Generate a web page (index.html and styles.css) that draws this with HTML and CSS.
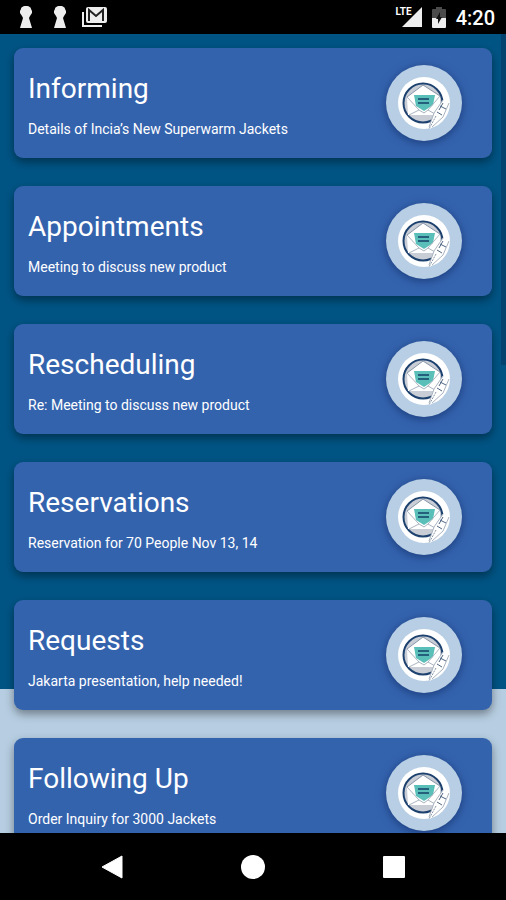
FILE: index.html
```html
<!DOCTYPE html>
<html lang="en">
<head>
    <meta charset="UTF-8">
    <meta name="viewport" content="width=device-width, initial-scale=1.0">
    <title>Email Templates</title>
    <link rel="stylesheet" href="styles.css">
</head>
<body>
    <!-- Shared envelope icon, used by every card -->
    <svg class="sprite" aria-hidden="true">
        <symbol id="envelope" viewBox="0 0 76 76">
            <circle cx="38" cy="38" r="38" fill="#b7cee4"/>
            <circle cx="38" cy="38" r="26" fill="#fff"/>
            <circle cx="37" cy="38" r="19.5" fill="#c9cdd6" stroke="#1d426f" stroke-width="2"/>
            <path d="M21 32 L37 20 L54 31 V50 H22 Z" fill="#fff"/>
            <path d="M21 32 L37 20 L54 31" fill="none" stroke="#8796a8"/>
            <path d="M28 30 H49 L47 40 L38 46 L30 41 Z" fill="#5abfb8"/>
            <path d="M32 34 H43 M32 38 H43" stroke="#24607c" stroke-width="2"/>
            <path d="M21 32 L33 45 L23 50 M54 31 L42 45 L49 49 M33 45 L38 48 L42 45" fill="none" stroke="#a9b3c0"/>
            <path d="M57 35 L63 38 L57 52 L44 64 L43 62 L48 48 Z" fill="#fff"/>
            <path d="M57 35 L48 48 L43 62 M63 38 L57 52 L46 62" fill="none" stroke="#a9b3c0"/>
            <path d="M54 41 L60 44 M51 47 L56 50 M57 38 L53 45" fill="none" stroke="#4e6684"/>
            <path d="M50 51 L43 64" stroke="#8796a8" stroke-dasharray="2 1"/>
        </symbol>
    </svg>

    <header class="status-bar">
        <div class="status-group notices">
            <svg width="14" height="24" viewBox="0 0 14 24" aria-hidden="true">
                <path d="M7 1 C11 1 12 3 12 4 L13 6 V8 L11 11 L10 13 L13 23 H1 L4 13 L3 11 L1 8 V6 L2 4 C2 3 3 1 7 1 Z" fill="#eee"/>
            </svg>
            <svg width="14" height="24" viewBox="0 0 14 24" aria-hidden="true">
                <path d="M7 1 C11 1 12 3 12 4 L13 6 V8 L11 11 L10 13 L13 23 H1 L4 13 L3 11 L1 8 V6 L2 4 C2 3 3 1 7 1 Z" fill="#eee"/>
            </svg>
            <svg width="26" height="22" viewBox="0 0 26 22" aria-hidden="true">
                <path d="M1 6 V20 H20" fill="none" stroke="#eee" stroke-width="2"/>
                <rect x="4" y="1" width="21" height="16" rx="2" fill="#eee"/>
                <path d="M7 15 V4 L14 10 L21 4 V15" fill="none" stroke="#222" stroke-width="2"/>
            </svg>
        </div>
        <div class="status-group">
            <div class="signal">
                <span class="network">LTE</span>
                <svg width="20" height="20" viewBox="0 0 20 20" aria-hidden="true">
                    <path d="M20 0 V20 H0 Z" fill="#eee"/>
                </svg>
            </div>
            <svg width="14" height="21" viewBox="0 0 14 21" aria-hidden="true">
                <path d="M4 0 H10 V2 H13 Q14 2 14 3 V11 H0 V3 Q0 2 1 2 H4 Z" fill="#4b4b4b"/>
                <path d="M0 11 H14 V20 Q14 21 13 21 H1 Q0 21 0 20 Z" fill="#eee"/>
                <path d="M8 5 L4 12 H6 V17 L10 10 H8 Z" fill="#111"/>
            </svg>
            <span class="clock">4:20</span>
        </div>
    </header>

    <main class="content">
        <a class="card" href="#informing">
            <div class="card-text">
                <h2>Informing</h2>
                <p>Details of Incia’s New Superwarm Jackets</p>
            </div>
            <svg class="card-icon" aria-hidden="true"><use href="#envelope"/></svg>
        </a>
        <a class="card" href="#appointments">
            <div class="card-text">
                <h2>Appointments</h2>
                <p>Meeting to discuss new product</p>
            </div>
            <svg class="card-icon" aria-hidden="true"><use href="#envelope"/></svg>
        </a>
        <a class="card" href="#rescheduling">
            <div class="card-text">
                <h2>Rescheduling</h2>
                <p>Re: Meeting to discuss new product</p>
            </div>
            <svg class="card-icon" aria-hidden="true"><use href="#envelope"/></svg>
        </a>
        <a class="card" href="#reservations">
            <div class="card-text">
                <h2>Reservations</h2>
                <p>Reservation for 70 People Nov 13, 14</p>
            </div>
            <svg class="card-icon" aria-hidden="true"><use href="#envelope"/></svg>
        </a>
        <a class="card" href="#requests">
            <div class="card-text">
                <h2>Requests</h2>
                <p>Jakarta presentation, help needed!</p>
            </div>
            <svg class="card-icon" aria-hidden="true"><use href="#envelope"/></svg>
        </a>
        <a class="card" href="#following-up">
            <div class="card-text">
                <h2>Following Up</h2>
                <p>Order Inquiry for 3000 Jackets</p>
            </div>
            <svg class="card-icon" aria-hidden="true"><use href="#envelope"/></svg>
        </a>
        <div class="scroll-thumb"></div>
    </main>

    <nav class="nav-bar">
        <button type="button" aria-label="Back">
            <svg width="24" height="24" viewBox="0 0 24 24" aria-hidden="true">
                <path d="M22 1 V23 L2 12 Z" fill="#fff" stroke="#fff" stroke-linejoin="round"/>
            </svg>
        </button>
        <button type="button" aria-label="Home">
            <svg width="24" height="24" viewBox="0 0 24 24" aria-hidden="true">
                <circle cx="12" cy="12" r="12" fill="#fff"/>
            </svg>
        </button>
        <button type="button" aria-label="Recent apps">
            <svg width="24" height="24" viewBox="0 0 24 24" aria-hidden="true">
                <rect x="1" y="1" width="22" height="22" rx="1" fill="#fff"/>
            </svg>
        </button>
    </nav>
</body>
</html>
```

FILE: styles.css
```css
* {
    box-sizing: border-box;
}

body {
    margin: 0;
    height: 100vh;
    display: flex;
    flex-direction: column;
    font-family: Roboto, sans-serif;
    color: #fff;
    background-color: #000;
}

.sprite {
    display: none;
}

.status-bar {
    flex: none;
    height: 34px;
    padding: 0 11px 0 19px;
    display: flex;
    align-items: center;
    justify-content: space-between;
}

.status-group {
    display: flex;
    align-items: center;
    gap: 10px;
}

.notices {
    gap: 20px;
}

.notices svg:last-child {
    margin-left: -5px;
}

.signal {
    display: flex;
    align-items: flex-start;
}

.network {
    font-family: "Liberation Sans Narrow", Roboto, sans-serif;
    font-size: 10px;
    line-height: 10px;
    font-weight: bold;
    margin-right: -10px;
}

.clock {
    font-size: 20px;
    line-height: 24px;
    font-weight: 500;
    padding-top: 2px;
}

.content {
    position: relative;
    flex: 1;
    min-height: 0;
    overflow: hidden;
    padding: 14px;
    display: flex;
    flex-direction: column;
    gap: 28px;
    background: linear-gradient(#005484 82%, #b7cee2 82%);
}

.card {
    flex: none;
    padding: 16px 30px 16px 14px;
    display: flex;
    align-items: center;
    justify-content: space-between;
    border-radius: 9px;
    background-color: #3463ae;
    box-shadow: 0 4px 10px rgba(0, 0, 0, 0.4);
    color: #fff;
    text-decoration: none;
}

.card-text {
    padding-top: 5px;
}

.card h2 {
    margin: 0 0 13px;
    font-size: 28px;
    line-height: 34px;
    font-weight: normal;
}

.card p {
    margin: 0;
    font-size: 14px;
    line-height: 20px;
}

.card-icon {
    flex: none;
    width: 76px;
    height: 78px;
    filter: drop-shadow(0 2px 5px rgba(0, 20, 70, 0.5));
}

.scroll-thumb {
    position: absolute;
    top: 0;
    right: 0;
    width: 5px;
    height: 331px;
    background-color: #044270;
}

.nav-bar {
    flex: none;
    height: 67px;
    padding: 0 42px;
    display: flex;
    align-items: center;
}

.nav-bar button {
    flex: 1;
    display: flex;
    justify-content: center;
    padding: 12px 0;
    border: 0;
    background: none;
}
```
